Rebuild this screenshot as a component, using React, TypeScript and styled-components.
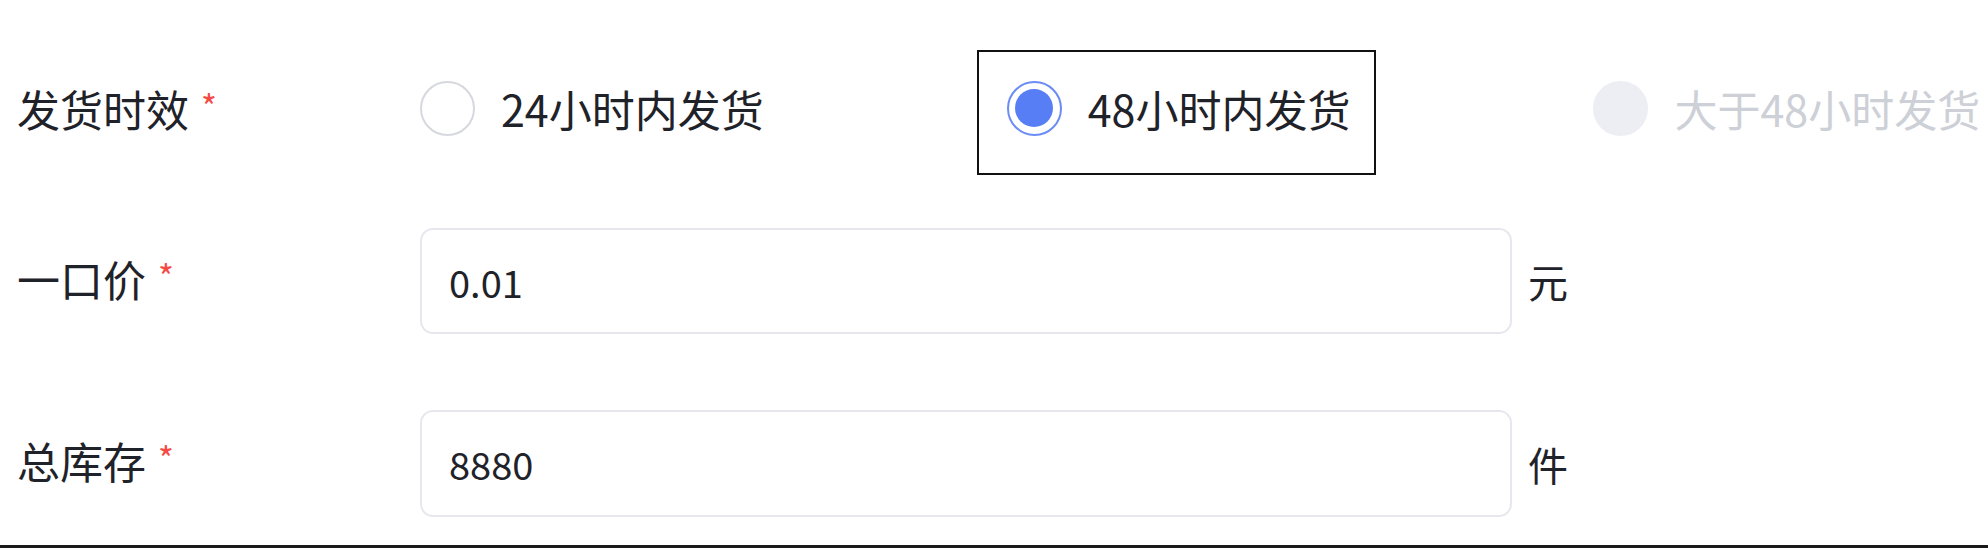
import React, { FC } from 'react';
import styled, { createGlobalStyle, css } from 'styled-components';

const GlobalStyle = createGlobalStyle`
  html, body {
    margin: 0;
    padding: 0;
    background: #ffffff;
  }

  body {
    font-family: 'Noto Sans CJK SC', 'Noto Sans', sans-serif;
    color: #1f2329;
    overflow: hidden;
  }
`;

const Page = styled.div`
  display: flex;
  flex-direction: column;
  height: 548px;
  width: 1988px;
`;

const Form = styled.div`
  display: flex;
  flex-direction: column;
  padding: 46px 0 0 17px;
`;

const Row = styled.div<{ $height: number; $top?: number }>`
  display: flex;
  align-items: center;
  height: ${(p) => p.$height}px;
  margin-top: ${(p) => p.$top ?? 0}px;
`;

const Label = styled.div<{ $shift?: number }>`
  display: flex;
  align-items: flex-start;
  width: 403px;
  flex-shrink: 0;
  margin-top: ${(p) => p.$shift ?? 0}px;

  font-size: 43px;
  line-height: 1;
  color: #1f2329;
  white-space: nowrap;
`;

const Required = styled.span`
  margin-left: 12px;
  margin-top: 2px;

  font-size: 34px;
  line-height: 1;
  color: #f54a45;
`;

const RadioGroup = styled.div`
  display: flex;
  align-items: center;
  gap: 243px;
`;

const RadioOption = styled.label<{ $focused?: boolean }>`
  position: relative;
  display: flex;
  align-items: center;
  gap: 26px;
  height: 56px;

  font-size: 43px;
  line-height: 1;
  white-space: nowrap;

  ${(p) =>
    p.$focused &&
    css`
      &::after {
        content: '';
        position: absolute;
        inset: -30px -26px -39px -30px;
        border: 2px solid #111111;
      }
    `}
`;

const RadioCircle = styled.span<{ $checked?: boolean; $disabled?: boolean }>`
  box-sizing: border-box;
  display: flex;
  align-items: center;
  justify-content: center;
  width: 55px;
  height: 55px;
  border-radius: 50%;
  border: 2px solid #d6d8de;
  background: #ffffff;

  ${(p) =>
    p.$checked &&
    css`
      border-color: #6c8cf5;

      &::before {
        content: '';
        width: 38px;
        height: 38px;
        border-radius: 50%;
        background: #577ef5;
      }
    `}

  ${(p) =>
    p.$disabled &&
    css`
      border-color: #eceef3;
      background: #eceef3;
    `}
`;

const RadioText = styled.span<{ $disabled?: boolean }>`
  color: ${(p) => (p.$disabled ? '#cdd0d6' : '#1f2329')};
`;

const TextInput = styled.input`
  box-sizing: border-box;
  width: 1092px;
  height: 100%;
  padding: 0 27px;
  border: 2px solid #e6e8ed;
  border-radius: 13px;
  background: #ffffff;
  outline: none;

  font-family: 'Noto Sans CJK SC', 'Noto Sans', sans-serif;
  font-size: 38px;
  color: #1f2329;
`;

const Unit = styled.span`
  margin-left: 16px;

  font-size: 40px;
  line-height: 1;
  color: #1f2329;
`;

const BottomRule = styled.div`
  margin-top: auto;
  height: 3px;
  background: #1a1a1a;
`;

type Option = { text: string; checked?: boolean; disabled?: boolean };

const options: Option[] = [
  { text: '24小时内发货' },
  { text: '48小时内发货', checked: true },
  { text: '大于48小时发货', disabled: true },
];

const FieldLabel: FC<{ text: string; shift?: number }> = ({ text, shift }) => (
  <Label $shift={shift}>
    {text}
    <Required>*</Required>
  </Label>
);

const App: FC = () => {
  return (
    <Page>
      <GlobalStyle />
      <Form>
        {/* delivery time */}
        <Row $height={124}>
          <FieldLabel text="发货时效" />
          <RadioGroup>
            {options.map((o) => (
              <RadioOption key={o.text} $focused={o.checked}>
                <RadioCircle $checked={o.checked} $disabled={o.disabled} />
                <RadioText $disabled={o.disabled}>{o.text}</RadioText>
              </RadioOption>
            ))}
          </RadioGroup>
        </Row>

        {/* price */}
        <Row $height={106} $top={58}>
          <FieldLabel text="一口价" shift={-6} />
          <TextInput defaultValue="0.01" readOnly />
          <Unit>元</Unit>
        </Row>

        {/* stock */}
        <Row $height={107} $top={76}>
          <FieldLabel text="总库存" shift={-6} />
          <TextInput defaultValue="8880" readOnly />
          <Unit>件</Unit>
        </Row>
      </Form>
      <BottomRule />
    </Page>
  );
};

export default App;
